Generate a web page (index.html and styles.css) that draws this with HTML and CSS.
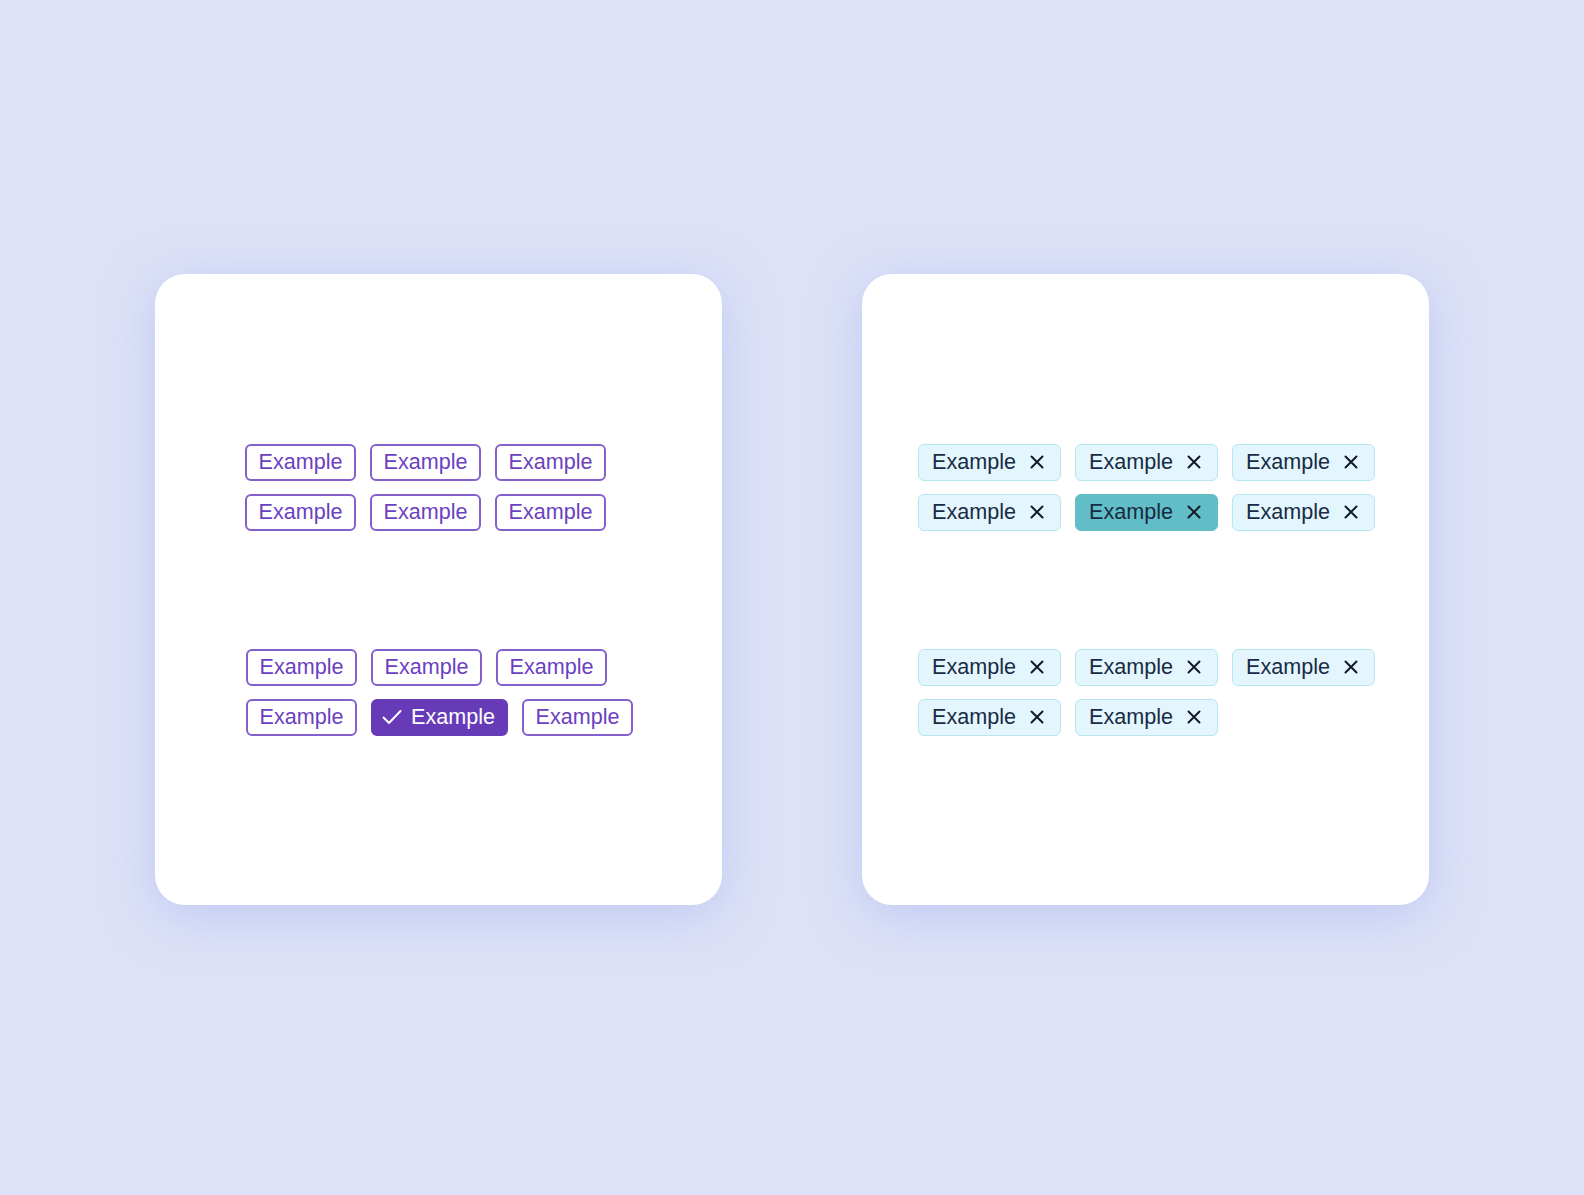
FILE: index.html
```html
<!DOCTYPE html>
<html lang="en">
<head>
<meta charset="utf-8">
<title>Chips</title>
<link rel="stylesheet" href="styles.css">
</head>
<body>
<main class="stage">
  <section class="card card-choice">
    <div class="group">
      <div class="row">
        <span class="chip chip-outline">Example</span>
        <span class="chip chip-outline">Example</span>
        <span class="chip chip-outline">Example</span>
      </div>
      <div class="row">
        <span class="chip chip-outline">Example</span>
        <span class="chip chip-outline">Example</span>
        <span class="chip chip-outline">Example</span>
      </div>
    </div>
    <div class="group group-shift">
      <div class="row">
        <span class="chip chip-outline">Example</span>
        <span class="chip chip-outline">Example</span>
        <span class="chip chip-outline">Example</span>
      </div>
      <div class="row">
        <span class="chip chip-outline">Example</span>
        <span class="chip chip-filled">
          <svg class="check" viewBox="0 0 20 16" width="20" height="16" aria-hidden="true"><path d="M1.5 8.5 L7 14 L18.5 2" fill="none" stroke="#fff" stroke-width="2" stroke-linecap="round" stroke-linejoin="round"/></svg>
          Example
        </span>
        <span class="chip chip-outline">Example</span>
      </div>
    </div>
  </section>

  <section class="card card-input">
    <div class="group">
      <div class="row">
        <span class="chip chip-input">Example<svg class="close" viewBox="0 0 14 14" width="14" height="14" aria-hidden="true"><path d="M1.5 1.5 L12.5 12.5 M12.5 1.5 L1.5 12.5" stroke="currentColor" stroke-width="2" stroke-linecap="round"/></svg></span>
        <span class="chip chip-input">Example<svg class="close" viewBox="0 0 14 14" width="14" height="14" aria-hidden="true"><path d="M1.5 1.5 L12.5 12.5 M12.5 1.5 L1.5 12.5" stroke="currentColor" stroke-width="2" stroke-linecap="round"/></svg></span>
        <span class="chip chip-input">Example<svg class="close" viewBox="0 0 14 14" width="14" height="14" aria-hidden="true"><path d="M1.5 1.5 L12.5 12.5 M12.5 1.5 L1.5 12.5" stroke="currentColor" stroke-width="2" stroke-linecap="round"/></svg></span>
      </div>
      <div class="row">
        <span class="chip chip-input">Example<svg class="close" viewBox="0 0 14 14" width="14" height="14" aria-hidden="true"><path d="M1.5 1.5 L12.5 12.5 M12.5 1.5 L1.5 12.5" stroke="currentColor" stroke-width="2" stroke-linecap="round"/></svg></span>
        <span class="chip chip-input chip-active">Example<svg class="close" viewBox="0 0 14 14" width="14" height="14" aria-hidden="true"><path d="M1.5 1.5 L12.5 12.5 M12.5 1.5 L1.5 12.5" stroke="currentColor" stroke-width="2" stroke-linecap="round"/></svg></span>
        <span class="chip chip-input">Example<svg class="close" viewBox="0 0 14 14" width="14" height="14" aria-hidden="true"><path d="M1.5 1.5 L12.5 12.5 M12.5 1.5 L1.5 12.5" stroke="currentColor" stroke-width="2" stroke-linecap="round"/></svg></span>
      </div>
    </div>
    <div class="group">
      <div class="row">
        <span class="chip chip-input">Example<svg class="close" viewBox="0 0 14 14" width="14" height="14" aria-hidden="true"><path d="M1.5 1.5 L12.5 12.5 M12.5 1.5 L1.5 12.5" stroke="currentColor" stroke-width="2" stroke-linecap="round"/></svg></span>
        <span class="chip chip-input">Example<svg class="close" viewBox="0 0 14 14" width="14" height="14" aria-hidden="true"><path d="M1.5 1.5 L12.5 12.5 M12.5 1.5 L1.5 12.5" stroke="currentColor" stroke-width="2" stroke-linecap="round"/></svg></span>
        <span class="chip chip-input">Example<svg class="close" viewBox="0 0 14 14" width="14" height="14" aria-hidden="true"><path d="M1.5 1.5 L12.5 12.5 M12.5 1.5 L1.5 12.5" stroke="currentColor" stroke-width="2" stroke-linecap="round"/></svg></span>
      </div>
      <div class="row">
        <span class="chip chip-input">Example<svg class="close" viewBox="0 0 14 14" width="14" height="14" aria-hidden="true"><path d="M1.5 1.5 L12.5 12.5 M12.5 1.5 L1.5 12.5" stroke="currentColor" stroke-width="2" stroke-linecap="round"/></svg></span>
        <span class="chip chip-input">Example<svg class="close" viewBox="0 0 14 14" width="14" height="14" aria-hidden="true"><path d="M1.5 1.5 L12.5 12.5 M12.5 1.5 L1.5 12.5" stroke="currentColor" stroke-width="2" stroke-linecap="round"/></svg></span>
      </div>
    </div>
  </section>
</main>
</body>
</html>
```

FILE: styles.css
```css
* {
  box-sizing: border-box;
}

html,
body {
  margin: 0;
  padding: 0;
}

body {
  width: 1584px;
  height: 1195px;
  background: #dde2f7;
  font-family: "Liberation Sans", Arial, Helvetica, sans-serif;
  overflow: hidden;
}

.stage {
  display: flex;
  justify-content: center;
  gap: 140px;
  padding-top: 274px;
}

.card {
  width: 567px;
  height: 631px;
  background: #ffffff;
  border-radius: 30px;
  box-shadow: 0 10px 50px rgba(168, 180, 240, 0.55);
  display: flex;
  flex-direction: column;
  justify-content: center;
  gap: 118px;
}

.card-choice {
  padding-left: 90px;
}

.card-input {
  padding-left: 56px;
}

.group {
  display: flex;
  flex-direction: column;
  gap: 13px;
}

.group-shift {
  padding-left: 1px;
}

.row {
  display: flex;
  gap: 14px;
}

.chip {
  display: inline-flex;
  align-items: center;
  height: 37px;
  border-radius: 6px;
  font-size: 21.6px;
  line-height: 1;
  white-space: nowrap;
}

.chip-outline {
  border: 2px solid #8460cd;
  color: #6b41c1;
  padding: 0 11.5px;
  background: #fff;
}

.chip-filled {
  background: #673ab7;
  border: 2px solid #673ab7;
  color: #fff;
  padding: 0 11px 0 9px;
  gap: 9px;
}

.check {
  display: block;
}

.chip-input {
  background: #e4f6fd;
  border: 1.5px solid #b6e7f1;
  color: #182a44;
  padding: 0 16px 0 13px;
  gap: 14px;
}

.chip-input .close {
  display: block;
  color: #111a26;
}

.chip-active {
  background: #62bec6;
  border-color: #62bec6;
}
```
